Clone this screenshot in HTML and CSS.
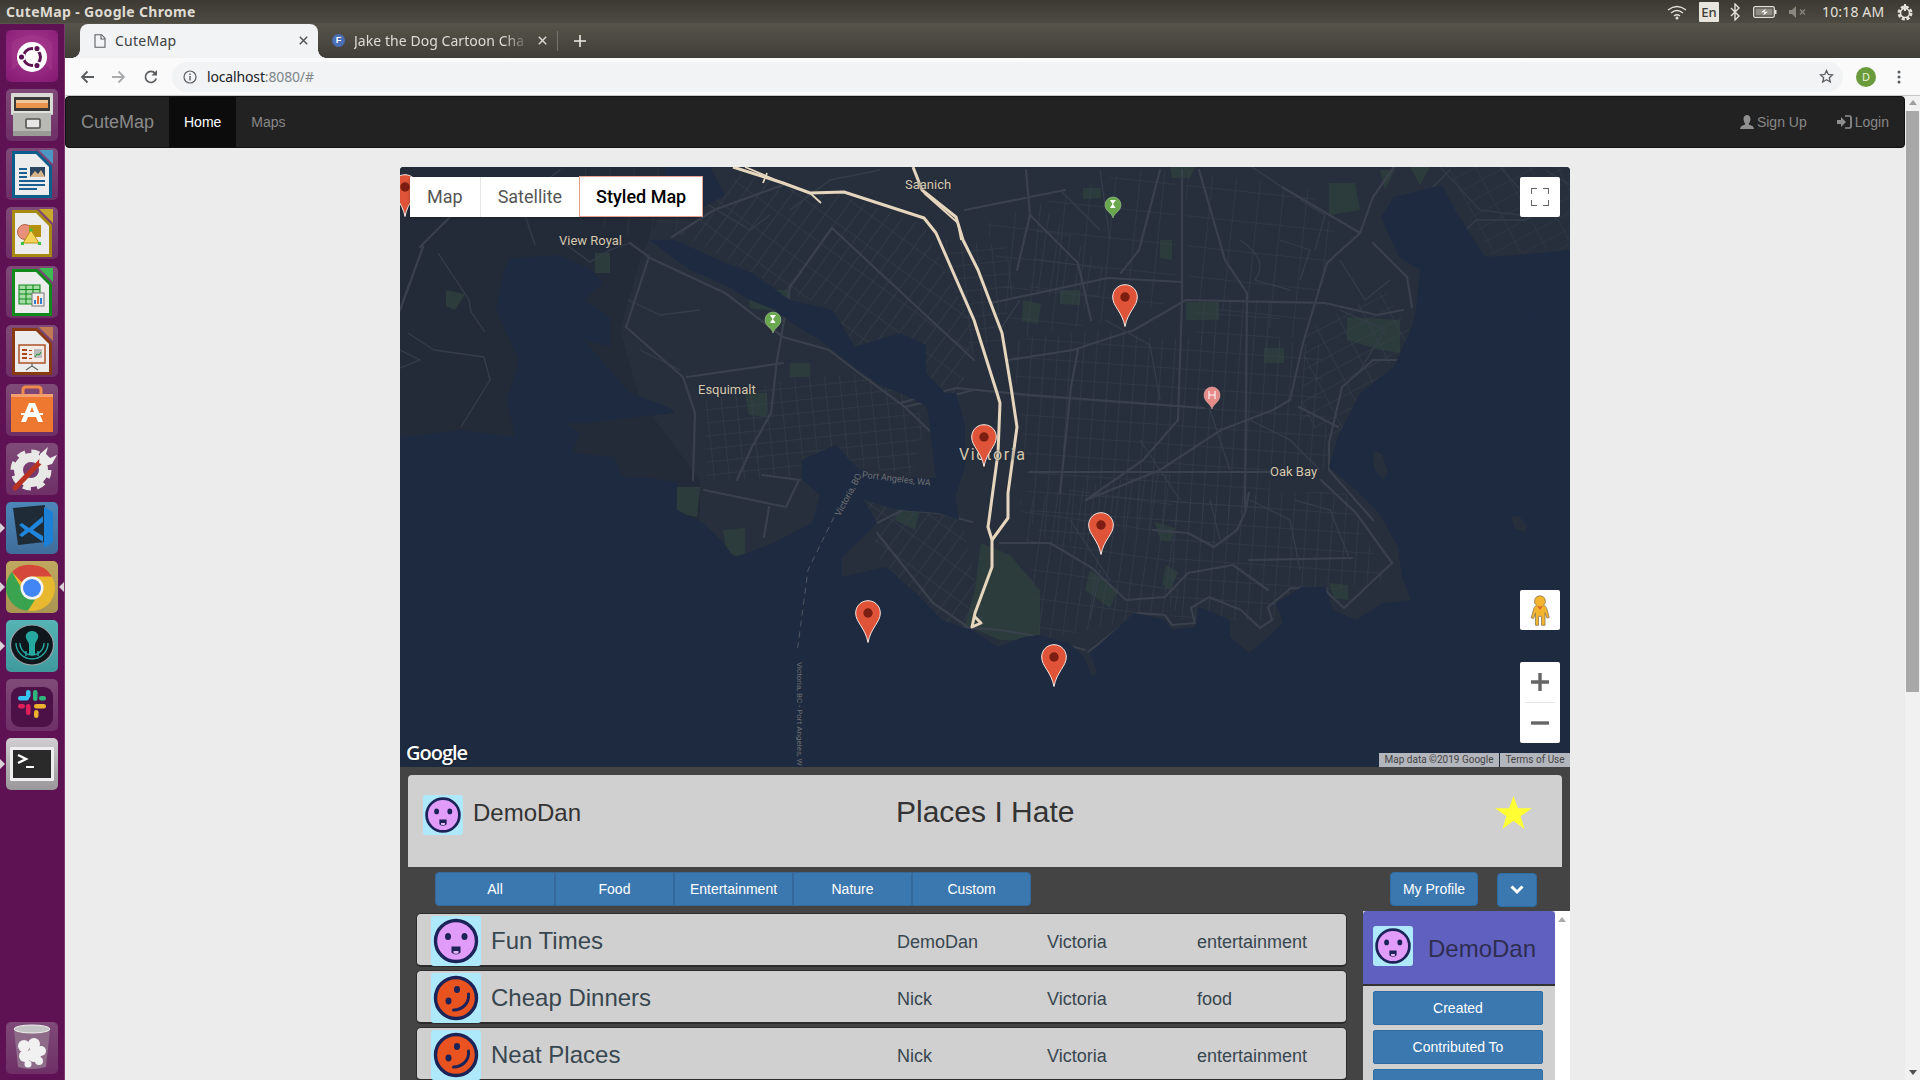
FILE: index.html
```html
<!DOCTYPE html>
<html lang="en">
<head>
<meta charset="utf-8">
<title>CuteMap</title>
<link rel="stylesheet" href="styles.css">
</head>
<body>
<svg class="defs" width="0" height="0" aria-hidden="true">
  <defs>
    <symbol id="face-purple" viewBox="0 0 50 50">
      <ellipse cx="25" cy="25" rx="20.5" ry="20.5" fill="#e09cf8" stroke="#1c2358" stroke-width="3.4"/>
      <ellipse cx="17" cy="20.5" rx="3" ry="3.6" fill="#1c2358"/>
      <ellipse cx="33.5" cy="20.5" rx="3" ry="3.6" fill="#1c2358"/>
      <path d="M20.5 30.5h9v6q-4.5 4-9 0z" fill="#1c2358"/>
      <path d="M22.5 35h5v2q-2.5 1.7-5 0z" fill="#e9b6f6"/>
    </symbol>
    <symbol id="face-orange" viewBox="0 0 50 50">
      <ellipse cx="25" cy="25" rx="20.5" ry="20.5" fill="#e8531f" stroke="#1c2358" stroke-width="3.4"/>
      <ellipse cx="26" cy="16.5" rx="3" ry="3.4" fill="#1c2358"/>
      <ellipse cx="17.5" cy="28" rx="3" ry="3.4" fill="#1c2358"/>
      <path d="M37.5 21c1 9-6 16-15 16" fill="none" stroke="#1c2358" stroke-width="3" stroke-linecap="round"/>
    </symbol>
    <symbol id="pin" viewBox="0 0 26 43">
      <path d="M13 .7C6 .7.7 6.2.7 13c0 9.500 9.500 14.500 12.300 29.500C15.800 27.500 25.300 22.500 25.300 13 25.300 6.200 20 .7 13 .7z" fill="#df5438" stroke="#f6e7e2" stroke-width="1"/>
      <circle cx="13" cy="13" r="4.7" fill="#7c1e12"/>
    </symbol>
    <pattern id="gridA" width="13" height="26" patternUnits="userSpaceOnUse" patternTransform="rotate(36)"><path d="M0 0H13M0 0V26" fill="none" stroke="#383f4c" stroke-width="1.2"/></pattern>
    <pattern id="gridB" width="15" height="13" patternUnits="userSpaceOnUse" patternTransform="rotate(-6)"><path d="M0 0H15M0 0V13" fill="none" stroke="#383f4c" stroke-width="1.100"/></pattern>
    <pattern id="gridC" width="13" height="19" patternUnits="userSpaceOnUse" patternTransform="rotate(4)"><path d="M0 0H13M0 0V19" fill="none" stroke="#383f4c" stroke-width="1.100"/></pattern>
    <pattern id="gridD" width="24" height="14" patternUnits="userSpaceOnUse" patternTransform="rotate(-28)"><path d="M0 0H24M0 0V14" fill="none" stroke="#383f4c" stroke-width="1.100"/></pattern>
    <pattern id="gridE" width="24" height="30" patternUnits="userSpaceOnUse" patternTransform="rotate(6)"><path d="M0 0H24M0 0V30" fill="none" stroke="#383f4c" stroke-width="1.100"/></pattern>
    <pattern id="gridF" width="12" height="28" patternUnits="userSpaceOnUse" patternTransform="rotate(8)"><path d="M0 0H12M0 0V28" fill="none" stroke="#383f4c" stroke-width="1.100"/></pattern>
  </defs>
</svg>

<div class="screen">
  <header class="os-bar">
    <span class="os-title">CuteMap - Google Chrome</span>
    <div class="tray">
      <svg class="tray-wifi" width="20" height="16" viewBox="0 0 20 16"><path d="M1 6q9-7 18 0M4 9q6-5 12 0M7 12q3-2.5 6 0" fill="none" stroke="#e4e1da" stroke-width="1.3"/><circle cx="10" cy="14" r="1.5" fill="#e4e1da"/></svg>
      <span class="tray-en">En</span>
      <svg class="tray-bt" width="10" height="18" viewBox="0 0 10 18"><path d="M1 5l8 8-4 4V1l4 4-8 8" fill="none" stroke="#e4e1da" stroke-width="1.400"/></svg>
      <svg class="tray-batt" width="24" height="14" viewBox="0 0 24 14"><rect x=".7" y="1.7" width="20.6" height="10.6" rx="1.5" fill="#45433c" stroke="#e4e1da" stroke-width="1.3"/><rect x="2.5" y="3.5" width="17" height="7" fill="#8f8c84"/><path d="M22 5h1.5v4H22z" fill="#e4e1da"/><path d="M13 3.500l-5 3.700 3.500 0-1.500 3.300 5-3.800-3.500 0z" fill="#fff"/></svg>
      <svg class="tray-vol" width="18" height="12" viewBox="0 0 18 12"><path d="M0 4h3l4-4v12l-4-4H0z" fill="#8a877f"/><path d="M11 3.500l5 5M16 3.500l-5 5" stroke="#8a877f" stroke-width="1.400"/></svg>
      <span class="tray-time">10:18 AM</span>
      <svg class="tray-gear" width="18" height="18" viewBox="0 0 18 18"><circle cx="9" cy="10" r="6" fill="none" stroke="#e4e1da" stroke-width="3" stroke-dasharray="3 1.7"/><circle cx="9" cy="10" r="4.5" fill="none" stroke="#e4e1da" stroke-width="1.5"/><path d="M9 1v7" stroke="#e4e1da" stroke-width="2"/></svg>
    </div>
  </header>

  <div class="below">
    <nav class="launcher">
      <div class="tile tile-ubuntu"><svg viewBox="0 0 52 52"><path d="M6 12q20-14 40 0v28q-20-18-40 0z" fill="#a3398c" opacity=".5"/><circle cx="26" cy="27" r="15" fill="#fff"/><circle cx="26" cy="27" r="8.500" fill="none" stroke="#5d1353" stroke-width="3"/><circle cx="31" cy="18.500" r="3.300" fill="#5d1353" stroke="#fff" stroke-width="1.500"/><circle cx="15.500" cy="27" r="3.300" fill="#5d1353" stroke="#fff" stroke-width="1.500"/><circle cx="31" cy="35.500" r="3.300" fill="#5d1353" stroke="#fff" stroke-width="1.500"/></svg></div>
      <div class="tile tile-plain"><svg viewBox="0 0 52 52"><rect x="5" y="4" width="42" height="22" rx="1" fill="#d9d9d6"/><rect x="8" y="8" width="36" height="15" fill="#3c3a38"/><rect x="10" y="11" width="32" height="3" fill="#f0c69a"/><rect x="10" y="14" width="32" height="5" fill="#e8944c"/><rect x="7" y="22" width="38" height="25" fill="#b8b8b5"/><rect x="7" y="22" width="38" height="2" fill="#e2e2e0"/><rect x="7" y="42" width="38" height="5" fill="#9a9a97"/><rect x="20" y="30" width="14" height="9" rx="1" fill="#e6e6e6" stroke="#55534f" stroke-width="1.600"/></svg></div>
      <div class="tile tile-plain"><svg viewBox="0 0 52 52"><path d="M33 2h14v14z" fill="#4d97c4"/><path d="M6 3h25l15 15v32H6z" fill="#0b5d8c"/><path d="M9 6h21l13 13v28H9z" fill="#ececec"/><path d="M13 20h8v2h-8zM13 24h8v2h-8zM13 28h8v2h-8zM13 32h26v2H13zM13 36h26v2H13zM13 40h18v2H13z" fill="#1a5f8f"/><rect x="24" y="19" width="15" height="10" fill="#2d4560"/><path d="M24 29l5-6 3 3 3-4 4 7z" fill="#d6b58a"/></svg></div>
      <div class="tile tile-plain"><svg viewBox="0 0 52 52"><path d="M33 2h14v14z" fill="#c8a92d"/><path d="M6 3h25l15 15v32H6z" fill="#a68a11"/><path d="M9 6h21l13 13v28H9z" fill="#ececec"/><circle cx="19" cy="25" r="7.500" fill="#e7917a" stroke="#b3614a"/><rect x="23" y="18" width="12" height="12" fill="#b8900f"/><path d="M17 36l8-13 8 13z" fill="#f6d45c" stroke="#b8900f"/><rect x="15" y="35" width="3" height="3" fill="#40c040"/><rect x="32" y="35" width="3" height="3" fill="#40c040"/><rect x="23.500" y="21.500" width="3" height="3" fill="#40c040"/></svg></div>
      <div class="tile tile-plain"><svg viewBox="0 0 52 52"><path d="M33 2h14v14z" fill="#3dbb55"/><path d="M6 3h25l15 15v32H6z" fill="#118a1c"/><path d="M9 6h21l13 13v28H9z" fill="#ececec"/><rect x="13" y="19" width="21" height="19" fill="#a6dca6"/><path d="M13 19h21v19H13zM13 23.500h21M13 28h21M13 33h21M20 19v19M27 19v19" fill="none" stroke="#118a1c" stroke-width="1.100"/><rect x="26" y="27" width="12" height="13" fill="#eee" stroke="#777"/><path d="M28 38v-4h2v4zM34 38v-6h2v6z" fill="#2f7fd0"/><path d="M31 38v-8h2v8z" fill="#e86a2c"/></svg></div>
      <div class="tile tile-plain"><svg viewBox="0 0 52 52"><path d="M33 2h14v14z" fill="#c17a55"/><path d="M6 3h25l15 15v32H6z" fill="#8a3a12"/><path d="M9 6h21l13 13v28H9z" fill="#ececec"/><rect x="13" y="20" width="26" height="18" fill="#f4ece4" stroke="#a9471c" stroke-width="1.400"/><path d="M16 24h5v2h-5zM16 28h5v2h-5zM16 32h5v2h-5zM23 25h3v1h-3zM23 29h3v1h-3zM23 33h3v1h-3z" fill="#a9471c"/><rect x="28" y="24" width="8" height="9" fill="#bbb"/><path d="M29 32l2-3 2 1 2-3" fill="none" stroke="#1f9a2d"/><path d="M26 38v3l-6 4M26 41l6 4" fill="none" stroke="#666" stroke-width="1.200"/></svg></div>
      <div class="tile tile-plain"><svg viewBox="0 0 52 52"><path d="M17 10V6q0-3 3-3h12q3 0 3 3v4" fill="none" stroke="#f08a4a" stroke-width="3"/><path d="M5 10h42v38H5z" fill="#ef7830"/><path d="M5 10h42v3H5z" fill="#f5a070"/><path d="M23 19h6l8 19h-5l-2-5h-8l-2 5h-5zM24 28h4l-2-5z" fill="#fff" fill-rule="evenodd"/><rect x="15" y="29" width="22" height="2" fill="#fff"/></svg></div>
      <div class="tile tile-plain"><svg viewBox="0 0 52 52"><circle cx="25" cy="27" r="18" fill="none" stroke="#e6e6e4" stroke-width="5" stroke-dasharray="8 6.100"/><circle cx="25" cy="27" r="12.500" fill="none" stroke="#e8e8e6" stroke-width="9"/><path d="M9 45L36 17" stroke="#b93222" stroke-width="5" stroke-linecap="round"/><path d="M33 20l1-9 8-7-2 7 4 4 7-3-5 9-7 2z" fill="#ececea"/></svg></div>
      <div class="tile tile-vscode running"><svg viewBox="0 0 52 52"><path d="M7 6l32-3v37l-27 3z" fill="#1f2b36"/><path d="M38 5l9 5v30l-9 6z" fill="#1b80d6"/><path d="M37 14L23 26l-7-5-3 2 6 5-6 5 3 2 7-5 14 10v-6L27 28l10-8z" fill="#1f86dc"/></svg></div>
      <div class="tile tile-chrome running running-right"><svg viewBox="0 0 52 52"><circle cx="26" cy="27" r="23" fill="#e8b92e"/><path d="M26 4a23 23 0 0 1 20 11.500H26a11.500 11.500 0 0 0-10 6L6 11A23 23 0 0 1 26 4z" fill="#d4473a"/><path d="M6 11l10.500 18a11.500 11.500 0 0 0 13 9L22 49.500A23 23 0 0 1 6 11z" fill="#39a350"/><circle cx="26" cy="27" r="11.500" fill="#f4f4f4"/><circle cx="26" cy="27" r="9" fill="#4285f4"/></svg></div>
      <div class="tile tile-kraken running"><svg viewBox="0 0 52 52"><ellipse cx="26" cy="25" rx="21.500" ry="20" fill="#10171c" stroke="#9aa7aa" stroke-width="1.200"/><path d="M14 23a12 12 0 0 0 24 0M10 23a16 16 0 0 0 32 0" fill="none" stroke="#25a8a0" stroke-width="1.400"/><path d="M26 11c5 0 7 4 6 7s-3 4-3 7v10h-6V25c0-3-2-4-3-7s1-7 6-7z" fill="#25a8a0"/><path d="M20 31v5M32 31v5" stroke="#25a8a0" stroke-width="1.400"/></svg></div>
      <div class="tile tile-slack"><svg viewBox="0 0 52 52"><rect x="5" y="8" width="42" height="40" rx="9" fill="#4c1248"/><rect x="12" y="17" width="11" height="4.500" rx="2.200" fill="#36c5f0"/><rect x="20" y="11" width="4.500" height="8" rx="2.200" fill="#36c5f0"/><rect x="27" y="11" width="4.500" height="11" rx="2.200" fill="#2eb67d"/><rect x="33" y="17" width="7" height="4.500" rx="2.200" fill="#2eb67d"/><rect x="28" y="25" width="12" height="4.500" rx="2.200" fill="#ecb22e"/><rect x="28" y="31" width="4.500" height="8" rx="2.200" fill="#ecb22e"/><rect x="12" y="25" width="7" height="4.500" rx="2.200" fill="#e01e5a"/><rect x="20" y="25" width="4.500" height="11" rx="2.200" fill="#e01e5a"/></svg></div>
      <div class="tile tile-term running"><svg viewBox="0 0 52 52"><rect x="4" y="9" width="44" height="34" rx="1" fill="#eeeeee"/><rect x="7" y="12" width="38" height="28" fill="#2a2a2a"/><path d="M12 17l8 4-8 4" fill="none" stroke="#fff" stroke-width="2.400"/><rect x="20" y="28" width="8" height="2" fill="#fff"/></svg></div>
      <div class="tile tile-plain tile-trash"><svg viewBox="0 0 52 52"><path d="M8 7h36l-4 38q-14 4-28 0z" fill="#8e6b89"/><ellipse cx="26" cy="7" rx="18" ry="4" fill="#c4c4c4" stroke="#eee"/><g fill="#f1f1f1"><circle cx="18" cy="24" r="6"/><circle cx="28" cy="22" r="6"/><circle cx="35" cy="29" r="5"/><circle cx="19" cy="34" r="6"/><circle cx="28" cy="33" r="7"/><circle cx="33" cy="39" r="4"/><circle cx="22" cy="42" r="3.500"/></g></svg></div>
    </nav>

    <div class="window">
      <div class="tabstrip">
        <div class="tab tab-active">
          <svg width="12" height="14" viewBox="0 0 12 14"><path d="M1 .7h6.500L11 4.200v9.100H1z" fill="none" stroke="#5c5f63" stroke-width="1.100"/><path d="M7 1v4h4" fill="none" stroke="#5c5f63" stroke-width="1.100"/></svg>
          <span class="tab-title">CuteMap</span>
          <svg class="tab-x" width="9" height="9" viewBox="0 0 9 9"><path d="M.8.8l7.400 7.400M8.200.8L.8 8.200" stroke="#555" stroke-width="1.500"/></svg>
        </div>
        <div class="tab tab-other">
          <span class="favicon">F</span>
          <span class="tab-title tab-fade">Jake the Dog Cartoon Cha</span>
          <svg class="tab-x" width="9" height="9" viewBox="0 0 9 9"><path d="M.8.8l7.400 7.400M8.200.8L.8 8.200" stroke="#d8d6d0" stroke-width="1.500"/></svg>
        </div>
        <span class="tab-sep"></span>
        <svg class="tab-new" width="12" height="12" viewBox="0 0 12 12"><path d="M6 0v12M0 6h12" stroke="#eceae4" stroke-width="1.600"/></svg>
      </div>

      <div class="toolbar">
        <svg class="tb-back" width="14" height="14" viewBox="0 0 14 14"><path d="M14 7H2M7.500 1.500L2 7l5.500 5.500" fill="none" stroke="#5a5d60" stroke-width="1.800"/></svg>
        <svg class="tb-fwd" width="14" height="14" viewBox="0 0 14 14"><path d="M0 7h12M6.500 1.500L12 7l-5.500 5.500" fill="none" stroke="#a9abad" stroke-width="1.800"/></svg>
        <svg class="tb-reload" width="14" height="14" viewBox="0 0 14 14"><path d="M12.200 8.500a5.500 5.500 0 1 1-1-5" fill="none" stroke="#5a5d60" stroke-width="1.700"/><path d="M13 0v5.500H7.500z" fill="#5a5d60"/></svg>
        <div class="omnibox">
          <svg width="14" height="14" viewBox="0 0 14 14"><circle cx="7" cy="7" r="6" fill="none" stroke="#5a5d60" stroke-width="1.200"/><path d="M7 6v4.500M7 3.500v1.500" stroke="#5a5d60" stroke-width="1.400"/></svg>
          <span class="url"><span class="url-host">localhost</span>:8080/#</span>
          <svg class="omni-star" width="15" height="15" viewBox="0 0 15 15"><path d="M7.500 1.500l1.800 4 4.300.4-3.300 2.800 1 4.300-3.800-2.300-3.800 2.300 1-4.300L1.400 5.900l4.300-.4z" fill="none" stroke="#5a5d60" stroke-width="1.300"/></svg>
        </div>
        <span class="profile">D</span>
        <svg class="tb-menu" width="4" height="14" viewBox="0 0 4 14"><circle cx="2" cy="2" r="1.500" fill="#5a5d60"/><circle cx="2" cy="7" r="1.500" fill="#5a5d60"/><circle cx="2" cy="12" r="1.500" fill="#5a5d60"/></svg>
      </div>

      <div class="viewport">
        <div class="page">
          <nav class="navbar">
            <a class="brand">CuteMap</a>
            <a class="nav-link nav-active">Home</a>
            <a class="nav-link">Maps</a>
            <div class="nav-right">
              <a class="nav-user"><svg width="14" height="14" viewBox="0 0 14 14"><path d="M7 0c2.200 0 3.500 1.700 3.500 4S9.300 8 8.800 8.700c0 .8.700 1.100 2 1.600s2.700 1 3.200 3.700H0c.5-2.700 1.900-3.200 3.200-3.700s2-.8 2-1.600C4.700 8 3.500 6.300 3.500 4S4.800 0 7 0z" fill="#8f8f8f"/></svg>Sign Up</a>
              <a class="nav-user"><svg width="15" height="14" viewBox="0 0 15 14"><path d="M0 5h4V2l5 5-5 5V9H0z" fill="#8f8f8f"/><path d="M8 1h4.500q1.500 0 1.500 1.500v9q0 1.500-1.500 1.500H8" fill="none" stroke="#8f8f8f" stroke-width="1.700"/></svg>Login</a>
            </div>
          </nav>

          <main class="container">
            <section class="map">
              <svg class="map-base" viewBox="400 167 1170 600" width="1170" height="600">
                <rect x="400" y="167" width="1170" height="600" fill="#272f3c"/>
                <polygon points="400,167 680,167 640,260 620,330 640,400 700,480 700,530 400,470" fill="#242b38"/>
                <!-- parks -->
                <g fill="#2c3c3c">
                  <polygon points="981,543 1010,555 1040,590 1040,640 1000,640 965,625 975,590"/>
                  <polygon points="1186,302 1219,302 1219,320 1186,320"/>
                  <polygon points="1264,348 1284,348 1284,363 1264,363"/>
                  <polygon points="790,363 810,363 810,377 790,377"/>
                  <polygon points="745,393 767,393 767,417 749,415"/>
                  <polygon points="595,253 610,253 610,273 595,273"/>
                  <polygon points="446,290 465,294 455,310 446,306"/>
                  <polygon points="677,487 700,487 697,517 677,513"/>
                  <polygon points="723,530 745,528 745,557 727,554"/>
                  <polygon points="1329,583 1348,585 1348,600 1334,598"/>
                  <polygon points="1329,183 1355,183 1360,210 1329,215"/>
                  <polygon points="1347,317 1400,320 1400,353 1380,350 1347,340"/>
                  <polygon points="748,290 790,290 790,313 750,308"/>
                  <polygon points="1023,300 1041,304 1038,324 1022,321"/>
                  <polygon points="1060,290 1080,290 1080,305 1060,304"/>
                  <polygon points="1083,188 1101,188 1101,198 1083,199"/>
                  <polygon points="1170,167 1195,167 1190,178 1172,178"/>
                  <polygon points="1160,240 1172,240 1172,260 1160,258"/>
                  <polygon points="900,500 920,510 915,530 895,520"/>
                  <polygon points="1410,167 1430,167 1420,185"/>
                  <polygon points="1380,170 1395,170 1385,190"/>
                  <polygon points="1155,522 1175,528 1170,542 1160,540"/>
                  <polygon points="1090,570 1118,590 1110,608 1085,590"/>
                  <polygon points="1166,565 1178,572 1170,590 1162,585"/>
                </g>
                <!-- street grids -->
                <g>
                  <polygon points="740,175 840,195 924,225 974,330 960,400 915,370 905,345 855,345 830,305 790,295 730,260 680,235" fill="url(#gridA)"/>
                  <polygon points="706,400 806,375 896,375 926,425 911,475 851,465 811,477 706,480" fill="url(#gridB)"/>
                  <polygon points="1012,340 1100,330 1170,340 1215,335 1320,345 1330,470 1270,475 1270,510 1050,545 1030,520" fill="url(#gridC)"/>
                  <polygon points="1020,500 1170,470 1180,610 1040,640" fill="url(#gridF)"/>
                  <polygon points="1170,500 1345,490 1385,580 1330,590 1280,620 1170,620" fill="url(#gridC)"/>
                  <polygon points="864,500 960,515 985,625 945,625 880,560" fill="url(#gridA)"/>
                  <polygon points="985,225 1130,170 1175,170 1175,300 1110,320 1010,340 1000,270" fill="url(#gridE)"/>
                  <polygon points="1040,205 1110,275 1090,310 1030,290" fill="url(#gridF)"/>
                  <polygon points="1185,170 1310,190 1340,240 1300,340 1190,300" fill="url(#gridE)"/>
                  <polygon points="1195,300 1280,300 1280,345 1195,345" fill="url(#gridC)"/>
                  <polygon points="1305,330 1385,290 1412,335 1365,395 1335,440 1300,420" fill="url(#gridD)"/>
                  <polygon points="940,240 1005,245 1015,285 1000,345 972,355" fill="url(#gridB)"/>
                  <polygon points="1445,167 1570,167 1570,250 1490,255" fill="url(#gridD)" opacity=".7"/>
                  <polygon points="560,167 690,167 680,230 640,240 580,220" fill="url(#gridE)" opacity=".7"/>
                </g>
                <!-- roads -->
                <g fill="none" stroke="#3a414d" stroke-width="2.200" stroke-linejoin="round" stroke-linecap="round">
                  <path d="M630 243L649 257L626 327L683 377L695 413L693 480M648 257L725 293L783 337L829 350L859 373L905 407L936 437M832 228L790 287L777 360L771 413L752 447L737 480M687 377L783 363M832 228L974 360M672 237L714 210L783 185M905 407L974 390M423 247L400 310M420 247L450 217"/>
                  <path d="M991 303L1108 278L1182 282M1008 360L1073 350L1134 330L1186 300L1325 303L1377 315L1403 310M900 403L956 388L1030 395L1204 408M1078 350L1071 387L1060 493M1182 170V300L1178 420L1143 460L1086 500M1199 170L1225 260L1247 293L1245 507M1282 187L1360 233L1327 263L1303 343L1290 400L1273 410L1221 430L1160 470L1086 500M1360 233L1373 197L1394 167M1373 243L1407 277L1412 307M1299 407L1338 427M1030 215L1078 263L1091 320M965 210L1030 197L1065 190M1026 170L1030 215L1017 270M1160 170L1139 250L1121 273M1407 360H1373L1342 387L1329 443V470L1373 520M1030 472H1125L1269 472"/>
                  <path d="M1392 563L1356 513L1321 480M1392 563L1344 608L1325 590L1291 588L1268 607L1272 620L1260 628L1241 610L1209 597L1191 608L1195 623L1172 625L1165 615L1138 613L1088 652M1000 543H1050L1092 568L1126 600L1165 597L1188 573L1233 565L1268 590M1249 560L1352 558M1153 530L1188 533L1214 547M1214 547L1237 530L1245 513L1249 493M960 627L1000 630L1030 635L1085 650M877 523L903 510L938 513L972 522M877 533L933 603L968 627M704 490L786 507L799 480M769 507L764 537M800 480L762 475"/>
                </g>
                <g fill="none" stroke="#363d4a" stroke-width="1.300" stroke-linejoin="round">
                  <path d="M438 253L469 300L471 312L485 332M408 333L434 350L484 357L490 380L461 427M460 210L520 200L560 170M520 200L535 245M400 350L420 360L395 370M560 240L590 262L610 250L630 243M628 300L660 315L700 310M640 350L680 370M700 200L750 230L770 215M790 210L830 180L880 170"/>
                  <path d="M1282 187L1252 167M1450 170L1410 210L1446 250L1476 220L1526 220L1556 190M1240 240Q1270 260 1255 280L1290 290M1280 240L1310 250L1300 280M1300 200L1325 215L1315 250M1340 260L1365 300L1390 280M1340 310L1385 330L1360 370M1060 190L1100 230M1100 170L1110 240M1020 300L1000 330M1105 320L1150 345L1160 400M1250 420L1290 440L1320 470M1210 410L1230 470M1140 440L1180 500M1250 500L1290 520L1300 570M1295 500L1330 510L1350 560M1100 570L1090 620M1210 500L1220 540M1070 520L1110 580"/>
                  <path d="M1440 167L1480 210L1520 215M1500 167L1530 200M1545 170L1570 185" stroke-opacity=".8"/>
                </g>
                <!-- water -->
                <g fill="#1e2a40">
                  <polygon points="400,437 461,430 515,437 507,400 519,360 496,310 503,273 510,258 560,255 591,270 603,283 584,300 610,317 610,347 584,340 630,393 668,407 675,413 637,417 591,423 565,423 580,433 572,453 614,457 622,477 650,478 677,482 677,510 703,523 721,540 734,557 747,553 773,543 812,523 820,495 802,480 802,460 836,445 859,470 885,478 936,478 925,390 945,393 956,393 965,427 965,467 955,497 959,520 938,513 899,510 864,500 877,523 842,557 842,577 886,567 920,597 942,620 972,630 998,647 1024,637 1038,635 1069,643 1084,657 1092,677 1097,672 1090,653 1134,613 1165,620 1172,630 1195,627 1199,607 1230,620 1230,637 1249,653 1268,637 1283,623 1276,603 1302,587 1325,587 1333,610 1356,620 1383,603 1411,600 1402,577 1398,547 1379,513 1356,490 1329,467 1338,437 1360,393 1394,367 1412,327 1416,310 1420,270 1399,257 1381,217 1394,197 1442,185 1455,210 1485,257 1520,255 1570,250 1570,767 400,767"/>
                  <polygon points="649,240 675,240 725,263 752,273 790,300 832,310 855,347 900,333 926,345 926,373 945,393 956,393 965,427 936,427 925,405 905,395 880,385 855,368 820,340 795,325 775,310 750,300 725,285 690,270"/>
                  <polygon points="665,167 710,167 725,195 690,215 665,200"/>
                  <ellipse cx="1533" cy="310" rx="3.500" ry="9"/>
                </g>
                <g fill="#272f3c"><polygon points="1373,450 1382,454 1388,472 1383,480 1374,468"/><polygon points="1511,517 1519,516 1527,526 1525,532 1515,529"/></g>
                <!-- ferry -->
                <path d="M834 517L808 570L797 653" fill="none" stroke="#525862" stroke-width="1" stroke-dasharray="6 5"/>
                <!-- highway -->
                <g fill="none" stroke="#e6d6bd" stroke-linejoin="round">
                  <path d="M733 167L783 183L810 193L844 192L924 218L936 233L974 320L997 393L1000 403L998 453L989 520L988 527L992 540L992 567L975 613L972 627L981 623L975 617" stroke-width="3"/>
                  <path d="M913 167L922 190L956 217L963 240L978 270L1002 333L1011 387L1017 427L1008 493L1008 518L992 540" stroke-width="3"/>
                  <path d="M745 167L783 183M767 173L763 183M810 193L821 203M924 193L958 223L961 240" stroke-width="1.800"/>
                </g>
              </svg>

              <span class="map-label label-saanich">Saanich</span>
              <span class="map-label label-viewroyal">View Royal</span>
              <span class="map-label label-esquimalt">Esquimalt</span>
              <span class="map-label label-victoria">Victoria</span>
              <span class="map-label label-oakbay">Oak Bay</span>
              <span class="ferry ferry-a1">Victoria, BC</span>
              <span class="ferry ferry-a2">- Port Angeles, WA</span>
              <span class="ferry ferry-b">Victoria, BC - Port Angeles, W</span>

              <svg class="map-pins" viewBox="400 167 1170 600" width="1170" height="600">
                <g>
                  <path d="M773 333c-1-5-8-7-8-13a8 8 0 0 1 16 0c0 6-7 8-8 13z" fill="#69a84f" stroke="#aec9a0" stroke-width=".5"/>
                  <path d="M770 315h6l-3 4 2.500 4H770l2.500-4z" fill="#fff"/>
                  <path d="M1113 218c-1-5-8-7-8-13a8 8 0 0 1 16 0c0 6-7 8-8 13z" fill="#69a84f" stroke="#aec9a0" stroke-width=".5"/>
                  <path d="M1110 200h6l-3 4 2.500 4H1110l2.500-4z" fill="#fff"/>
                  <path d="M1212 409c-1-5-8-7-8-14a8 8 0 0 1 16 0c0 7-7 9-8 14z" fill="#e58b88" stroke="#eeb3b0" stroke-width=".5"/>
                  <path d="M1209 391v8M1215 391v8M1209 395h6" stroke="#fff" stroke-width="1.100" fill="none"/>
                </g>
                <use href="#pin" x="392" y="174" width="26" height="43"/>
                <use href="#pin" x="1112" y="284" width="26" height="43"/>
                <use href="#pin" x="971" y="424" width="26" height="43"/>
                <use href="#pin" x="1088" y="512" width="26" height="43"/>
                <use href="#pin" x="1041" y="644" width="26" height="43"/>
                <use href="#pin" x="855" y="600" width="26" height="43"/>
              </svg>

              <div class="map-types">
                <button class="mt">Map</button>
                <button class="mt mt-sep">Satellite</button>
                <button class="mt mt-on">Styled Map</button>
              </div>
              <div class="map-btn fullscreen"><svg width="18" height="18" viewBox="0 0 18 18"><path d="M0 6V0h6M12 0h6v6M18 12v6h-6M6 18H0v-6" fill="none" stroke="#666" stroke-width="2"/></svg></div>
              <div class="map-btn pegman"><svg width="20" height="31" viewBox="0 0 20 31"><path d="M10 .7a5.500 5.500 0 0 1 3.500 9.700c2 .6 3 1.500 3.400 3.500l2.300 8.500-2.300.7-1.900-5.400v12.600H11.500v-9h-3v9H5.500V18.200l-2 5.400-2.300-.7 2.500-8.900c.4-2 1.400-2.800 3-3.400A5.500 5.500 0 0 1 10 .7z" fill="#f3b52f" stroke="#8a7a55" stroke-width=".8"/><path d="M7 11l3 4 3-4-3 .5z" fill="#d96a2b"/></svg></div>
              <div class="zoom-box">
                <div class="zoom-btn"><svg width="18" height="18" viewBox="0 0 18 18"><path d="M9 0v18M0 9h18" stroke="#666" stroke-width="3.400"/></svg></div>
                <div class="zoom-sep"></div>
                <div class="zoom-btn"><svg width="18" height="18" viewBox="0 0 18 18"><path d="M0 9h18" stroke="#666" stroke-width="3.400"/></svg></div>
              </div>
              <span class="google">Google</span>
              <div class="attrib"><span class="attrib-item attrib-data">Map data ©2019 Google</span><span class="attrib-item attrib-terms">Terms of Use</span></div>
            </section>

            <section class="panel">
              <div class="card">
                <div class="card-user">
                  <span class="avatar avatar-40"><svg><use href="#face-purple"/></svg></span>
                  <span class="card-name">DemoDan</span>
                </div>
                <h2 class="card-title">Places I Hate</h2>
                <svg class="card-star" width="37" height="33" viewBox="0 0 37 33"><path d="M18.500 0l4.400 12.300h14.100l-11.400 8 4 12.700-11.100-8-11.100 8 4-12.700L0 12.300h14.100z" fill="#ffff33"/></svg>
              </div>

              <div class="filters">
                <div class="btn-group">
                  <button class="btn btn-seg">All</button>
                  <button class="btn btn-seg">Food</button>
                  <button class="btn btn-seg">Entertainment</button>
                  <button class="btn btn-seg">Nature</button>
                  <button class="btn btn-seg">Custom</button>
                </div>
                <div class="filters-right">
                  <button class="btn btn-profile">My Profile</button>
                  <button class="btn btn-caret"><svg width="14" height="10" viewBox="0 0 14 10"><path d="M1.500 1.500L7 7l5.500-5.500" fill="none" stroke="#fff" stroke-width="3"/></svg></button>
                </div>
              </div>

              <div class="lower">
                <div class="list">
                  <article class="row">
                    <span class="avatar avatar-50"><svg><use href="#face-purple"/></svg></span>
                    <span class="row-title">Fun Times</span>
                    <span class="row-col">DemoDan</span>
                    <span class="row-col">Victoria</span>
                    <span class="row-col">entertainment</span>
                  </article>
                  <article class="row">
                    <span class="avatar avatar-50"><svg><use href="#face-orange"/></svg></span>
                    <span class="row-title">Cheap Dinners</span>
                    <span class="row-col">Nick</span>
                    <span class="row-col">Victoria</span>
                    <span class="row-col">food</span>
                  </article>
                  <article class="row">
                    <span class="avatar avatar-50"><svg><use href="#face-orange"/></svg></span>
                    <span class="row-title">Neat Places</span>
                    <span class="row-col">Nick</span>
                    <span class="row-col">Victoria</span>
                    <span class="row-col">entertainment</span>
                  </article>
                </div>
                <aside class="side">
                  <div class="side-head">
                    <span class="avatar avatar-side"><svg><use href="#face-purple"/></svg></span>
                    <span class="side-name">DemoDan</span>
                  </div>
                  <div class="side-body">
                    <button class="btn btn-side">Created</button>
                    <button class="btn btn-side">Contributed To</button>
                    <button class="btn btn-side" aria-label="Favorites"></button>
                  </div>
                </aside>
                <div class="inner-scroll"><span class="arrow-up arrow-pale"></span></div>
              </div>
            </section>
          </main>
        </div>
        <div class="scrollbar">
          <span class="arrow-up"></span>
          <span class="thumb"></span>
          <span class="arrow-down"></span>
        </div>
      </div>
    </div>
  </div>
</div>
</body>
</html>
```

FILE: styles.css
```css
* { box-sizing: border-box; }
html, body { margin: 0; padding: 0; height: 100%; overflow: hidden; }
body { font-family: "Liberation Sans", Arial, sans-serif; font-size: 14px; color: #333; background: #ececec; }
button { font-family: inherit; }
.defs { position: absolute; }

.screen { width: 1920px; height: 1080px; display: flex; flex-direction: column; overflow: hidden; }

/* OS bar */
.os-bar { height: 24px; flex: none; display: flex; align-items: center; justify-content: space-between; background: linear-gradient(#3d3a35, #4d4a42); border-bottom: 1px solid #57544b; padding-left: 6px; }
.os-title { font: 700 14px "Noto Sans", "Open Sans", sans-serif; color: #dfdbd2; letter-spacing: .33px; }
.tray { display: flex; align-items: center; height: 24px; color: #e4e1da; padding-right: 6px; }
.tray-wifi { margin-right: 12px; }
.tray-en { width: 20px; height: 20px; background: #e8e5de; color: #3c3a35; font: 500 13px/20px "Noto Sans", sans-serif; text-align: center; border-radius: 1px; margin-right: 11px; }
.tray-bt { margin-right: 13px; }
.tray-batt { margin-right: 12px; }
.tray-vol { margin-right: 15px; }
.tray-time { font: 400 14px "Noto Sans", sans-serif; width: 61px; margin-right: 13px; letter-spacing: .15px; white-space: nowrap; }

.below { flex: 1; display: flex; min-height: 0; }

/* launcher */
.launcher { width: 65px; flex: none; background: #5e1254; border-right: 1px solid #7a3a70; display: flex; flex-direction: column; gap: 7px; padding: 6px 0 6px 6px; }
.tile { position: relative; width: 52px; height: 52px; border-radius: 5px; flex: none; }
.tile svg { display: block; width: 52px; height: 52px; }
.tile-ubuntu { background: radial-gradient(circle at 50% 40%, #a8388f, #851a72); }
.tile-plain { background: linear-gradient(#7f4a78, #6e2f66); }
.tile-vscode { background: linear-gradient(#4c86b8, #3f6d9a); }
.tile-chrome { background: linear-gradient(#c0a85f, #a99551); }
.tile-kraken { background: linear-gradient(#56b4b4, #3f9a9e); }
.tile-slack { background: linear-gradient(#7f4a78, #6e2f66); }
.tile-term { background: linear-gradient(#d0ced0, #9a979a); }
.tile-trash { margin-top: auto; }
.running::before { content: ""; position: absolute; left: -6px; top: 21px; border-left: 5px solid #d9d3d8; border-top: 5px solid transparent; border-bottom: 5px solid transparent; }
.running-right::after { content: ""; position: absolute; right: -6px; top: 21px; border-right: 5px solid #d9d3d8; border-top: 5px solid transparent; border-bottom: 5px solid transparent; }

.window { flex: 1; min-width: 0; display: flex; flex-direction: column; }

/* tabs */
.tabstrip { height: 34px; flex: none; display: flex; align-items: center; background: linear-gradient(#56534a, #403e38); padding-left: 15px; position: relative; }
.tab { height: 34px; display: flex; align-items: center; position: relative; font: 400 14px "Noto Sans", sans-serif; padding-bottom: 1px; }
.tab-active { width: 238px; background: #f2f3f5; border-radius: 8px 8px 0 0; padding: 0 10px 1px 14px; color: #3c4043; }
.tab-active::before, .tab-active::after { content: ""; position: absolute; bottom: 0; width: 8px; height: 8px; }
.tab-active::before { left: -8px; background: radial-gradient(circle at 0 0, transparent 7.500px, #f2f3f5 8px); }
.tab-active::after { right: -8px; background: radial-gradient(circle at 100% 0, transparent 7.500px, #f2f3f5 8px); }
.tab-active .tab-title { margin-left: 9px; flex: 1; letter-spacing: .25px; }
.tab-other { width: 239px; padding: 0 10px 1px 14px; color: #dedcd6; }
.favicon { width: 13px; height: 13px; border-radius: 50%; background: #4a6fb5; color: #fff; font: 700 9px/13px "Liberation Sans", sans-serif; text-align: center; flex: none; }
.tab-fade { width: 176px; flex: none; margin-left: 9px; margin-right: 8px; white-space: nowrap; letter-spacing: .05px; -webkit-mask-image: linear-gradient(90deg, #000 85%, transparent); mask-image: linear-gradient(90deg, #000 85%, transparent); }
.tab-sep { width: 1px; height: 20px; background: #77746b; }
.tab-new { margin-left: 16px; }

/* toolbar */
.toolbar { height: 38px; flex: none; background: #fafafb; border-bottom: 1px solid #c8c8c8; display: flex; align-items: center; padding-left: 15px; padding-right: 5px; }
.tb-fwd { margin-left: 18px; }
.tb-reload { margin-left: 18px; }
.omnibox { width: 1671px; height: 30px; border-radius: 15px; background: #f1f3f4; margin-left: 14px; display: flex; align-items: center; padding: 0 9px 0 11px; }
.url { font: 400 14px "Noto Sans", sans-serif; color: #80868b; margin-left: 10px; letter-spacing: -.15px; }
.url-host { color: #202124; }
.omni-star { margin-left: auto; }
.profile { width: 20px; height: 20px; border-radius: 50%; background: #6a9b3b; color: #e8f0dc; font: 400 11px/20px "Noto Sans", sans-serif; text-align: center; margin-left: 13px; }
.tb-menu { margin-left: 21px; }

/* page */
.viewport { flex: 1; display: flex; min-height: 0; }
.page { flex: 1; min-width: 0; overflow: hidden; background: #ececec; }
.scrollbar { width: 15px; flex: none; background: #f1f1f1; display: flex; flex-direction: column; align-items: center; padding-top: 4px; position: relative; }
.arrow-up { width: 0; height: 0; border-left: 4px solid transparent; border-right: 4px solid transparent; border-bottom: 5px solid #9e9e9e; display: block; }
.arrow-down { width: 0; height: 0; border-left: 4px solid transparent; border-right: 4px solid transparent; border-top: 5px solid #505050; display: block; margin-top: auto; margin-bottom: 5px; }
.thumb { width: 13px; height: 581px; background: #a8a8a8; margin-top: 6px; display: block; }

.navbar { height: 52px; background: #222; border: 1px solid #111; border-radius: 4px; display: flex; align-items: stretch; margin-bottom: 19px; color: #9d9d9d; }
.brand { font-size: 18px; line-height: 50px; padding: 0 15px; width: 103px; color: #8a8a8a; }
.nav-link { font-size: 14px; line-height: 50px; padding: 0 15px; color: #888; }
.nav-active { background: #0c0c0c; color: #fff; }
.nav-right { margin-left: auto; display: flex; gap: 30px; padding-right: 15px; }
.nav-user { display: flex; align-items: center; gap: 3px; color: #888; font-size: 14px; }

.container { width: 1170px; margin: 0 auto; }

/* map */
.map { position: relative; width: 1170px; height: 600px; overflow: hidden; border-radius: 4px 4px 0 0; background: #1e2a40; }
.map-base, .map-pins { position: absolute; left: 0; top: 0; display: block; }
.map-label { position: absolute; font: 400 13px "Roboto", sans-serif; color: #d6c9ae; white-space: nowrap; text-shadow: 0 0 2px #1d2534; }
.label-saanich { left: 505px; top: 10px; }
.label-viewroyal { left: 159px; top: 66px; }
.label-esquimalt { left: 298px; top: 215px; }
.label-victoria { left: 559px; top: 278px; font-size: 16px; letter-spacing: 1.6px; }
.label-oakbay { left: 870px; top: 297px; }
.ferry { position: absolute; font: 400 9px/10px "Roboto", sans-serif; color: #6f7072; white-space: nowrap; transform-origin: 0 0; }
.ferry-a1 { left: 433px; top: 346px; transform: rotate(-62deg); }
.ferry-a2 { left: 458px; top: 302px; transform: rotate(7deg); }
.ferry-b { left: 404px; top: 495px; font-size: 8px; transform: rotate(90deg); }

.map-types { position: absolute; left: 10px; top: 10px; height: 40px; display: flex; background: #fff; box-shadow: 0 1px 3px rgba(0,0,0,.3); }
.mt { border: 0; background: #fff; font: 400 18px "Roboto", sans-serif; color: #565656; padding: 0 17px 2px; height: 40px; }
.mt-sep { border-left: 1px solid #e6e6e6; }
.mt-on { color: #000; font-weight: 500; border: 1px solid #e3a08f; padding: 0 16px 1px; margin-top: -1px; height: 41px; margin-right: -1px; }
.map-btn { position: absolute; left: 1120px; width: 40px; height: 40px; background: #fff; border-radius: 2px; display: flex; align-items: center; justify-content: center; }
.fullscreen { top: 10px; }
.pegman { top: 423px; }
.zoom-box { position: absolute; left: 1120px; top: 495px; width: 40px; height: 81px; background: #fff; border-radius: 2px; display: flex; flex-direction: column; }
.zoom-btn { height: 40px; display: flex; align-items: center; justify-content: center; }
.zoom-sep { height: 1px; margin: 0 5px; background: #e6e6e6; }
.google { position: absolute; left: 6px; top: 572px; font: 600 20px "Open Sans", sans-serif; color: #fff; letter-spacing: -1px; text-shadow: 0 0 2px rgba(0,0,0,.6); }
.attrib { position: absolute; right: 0; bottom: 0; height: 14px; display: flex; gap: 1px; font: 400 10px/14px "Roboto", sans-serif; color: #444; }
.attrib-item { background: #b3b6bd; display: block; text-align: center; }
.attrib-data { width: 120px; }
.attrib-terms { width: 70px; }

/* panel */
.panel { background: #444; height: 313px; overflow: hidden; }
.card { height: 92px; margin: 8px 8px 0; background: #d0d0d0; border-radius: 4px 4px 0 0; display: flex; position: relative; padding: 20px 0 0 15px; }
.card-user { display: flex; align-items: flex-start; width: 473px; flex: none; }
.avatar { display: block; background: #aee9fb; border-radius: 3px; flex: none; overflow: hidden; }
.avatar svg { display: block; width: 100%; height: 100%; }
.avatar-40 { width: 40px; height: 40px; }
.card-name { font-size: 24px; line-height: 36px; margin-left: 10px; color: #333; }
.card-title { margin: -3px 0 0; font-size: 30px; font-weight: 400; line-height: 40px; color: #333; }
.card-star { position: absolute; left: 1087px; top: 21px; }

.filters { display: flex; justify-content: space-between; margin: 5px 33px 0 35px; height: 39px; }
.btn { border: 1px solid #2e6da4; background: #3c78b0; color: #fff; font-size: 14px; height: 34px; border-radius: 4px; padding: 0; }
.btn-group { display: flex; }
.btn-seg { width: 119px; border-radius: 0; border-color: #35699b; position: relative; }
.btn-seg:first-child { width: 120px; border-radius: 4px 0 0 4px; }
.btn-seg:last-child { border-radius: 0 4px 4px 0; }
.filters-right { display: flex; gap: 19px; }
.btn-profile { width: 88px; }
.btn-caret { width: 40px; margin-top: 1px; display: flex; align-items: center; justify-content: center; }

.lower { display: flex; padding-left: 16px; height: 200px; }
.list { width: 931px; padding-top: 2px; margin-right: 16px; flex: none; }
.row { height: 54px; margin-bottom: 3px; background: #d0d0d0; border: 1px solid #2c2c2c; border-bottom-width: 2px; border-radius: 5px; padding: 2px 0 0 14px; display: flex; align-items: center; }
.avatar-50 { width: 50px; height: 50px; }
.row-title { font-size: 24px; color: #38464f; margin-left: 10px; width: 406px; flex: none; }
.row-col { font-size: 18px; color: #38464f; width: 150px; flex: none; margin-top: 3px; }

.side { width: 192px; flex: none; background: #d0d0d0; }
.side-head { height: 75px; background: #6060c0; border-bottom: 2px solid #333; border-radius: 4px 4px 0 0; display: flex; align-items: flex-start; padding: 15px 0 0 10px; }
.avatar-side { width: 40px; height: 40px; }
.side-name { font-size: 24px; color: #2e2e50; margin-left: 15px; line-height: 46px; }
.side-body { display: flex; flex-direction: column; gap: 5px; padding: 5px 0 0 10px; }
.btn-side { width: 170px; border-radius: 2px; flex: none; }
.inner-scroll { width: 15px; flex: none; background: #fff; padding: 6px 0 0 3px; }
.arrow-pale { border-bottom-color: #aaa; }
```
